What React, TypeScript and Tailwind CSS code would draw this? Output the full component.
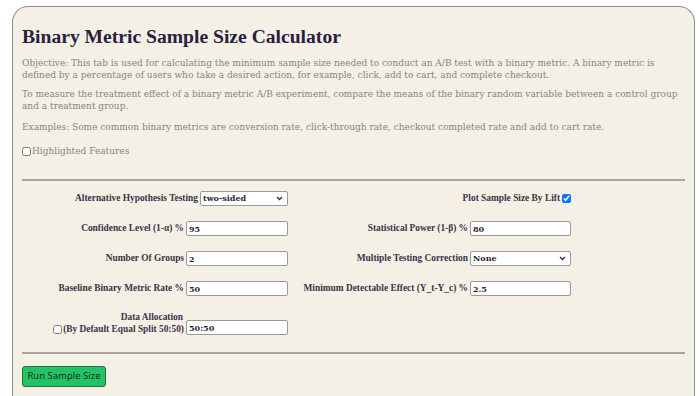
import { ReactNode } from 'react'

const serif = { fontFamily: '"DejaVu Serif", "Liberation Serif", serif' }
const libSerif = { fontFamily: '"Liberation Serif", "DejaVu Serif", serif' }

function TextInput({ value, w = 'w-[102px]' }: { value: string; w?: string }) {
    return (
        <input
            type="text"
            defaultValue={value}
            className={`${w} block h-[15px] rounded-[2px] border border-[#9a9a9a] bg-white px-[2px] py-0 text-[8px] font-bold text-[#2d2637] outline-none`}
            style={serif}
        />
    )
}

function Select({ value, w }: { value: string; w: string }) {
    return (
        <div className={`relative ${w} h-[15px]`}>
            <select
                defaultValue={value}
                className="block h-[15px] w-full appearance-none rounded-[2px] border border-[#9a9a9a] bg-white px-[2px] py-0 text-[8px] leading-[13px] font-bold text-[#2d2637] outline-none"
                style={serif}
            >
                <option>{value}</option>
            </select>
            <svg
                className="pointer-events-none absolute right-[5px] top-[5px]"
                width="7"
                height="5"
                viewBox="0 0 7 5"
            >
                <path d="M1 1l2.5 2.5L6 1" fill="none" stroke="#333" strokeWidth="1.4" />
            </svg>
        </div>
    )
}

function Field({ label, children }: { label: ReactNode; children: ReactNode }) {
    return (
        <div className="flex items-center justify-end gap-[2px]">
            <span className="text-[9.4px] font-bold text-[#3b3345]" style={libSerif}>
                {label}
            </span>
            {children}
        </div>
    )
}

export default function App() {
    return (
        <div className="min-h-screen bg-white pl-3 pr-[5px] pt-[6px]" style={serif}>
            <div className="h-[400px] rounded-t-[16px] border border-b-0 border-[#8c8c8c] bg-[#f4f0e5] pl-[9px] pr-[9px] pt-[17px]">
                <h1 className="text-[19.6px] font-bold leading-[26px] text-[#2a2040]" style={libSerif}>
                    Binary Metric Sample Size Calculator
                </h1>
                <div className="mt-[7px] text-[9px] leading-[12px] text-[#8a8385]">
                    <p className="whitespace-nowrap">
                        Objective: This tab is used for calculating the minimum sample size needed to conduct an A/B test with a binary metric. A binary metric is
                        <br />
                        defined by a percentage of users who take a desired action, for example, click, add to cart, and complete checkout.
                    </p>
                    <p className="mt-[7px] whitespace-nowrap">
                        To measure the treatment effect of a binary metric A/B experiment, compare the means of the binary random variable between a control group
                        <br />
                        and a treatment group.
                    </p>
                    <p className="mt-[9px] whitespace-nowrap">
                        Examples: Some common binary metrics are conversion rate, click-through rate, checkout completed rate and add to cart rate.
                    </p>
                    <label className="mt-[12px] flex items-center gap-[1px]">
                        <input type="checkbox" className="m-0 h-[9px] w-[9px]" />
                        <span>Highlighted Features</span>
                    </label>
                </div>

                <hr className="mt-[22px] border-t-2 border-[#a9a5a1]" />

                <div className="mt-[10px] grid grid-cols-[266px_283px] gap-y-[15px]">
                    <Field label="Alternative Hypothesis Testing">
                        <Select value="two-sided" w="w-[88px]" />
                    </Field>
                    <div className="flex items-center justify-end gap-[2px]">
                        <span className="text-[9.4px] font-bold text-[#3b3345]" style={libSerif}>
                            Plot Sample Size By Lift
                        </span>
                        <input type="checkbox" defaultChecked className="m-0 h-[9px] w-[9px]" />
                    </div>

                    <Field label="Confidence Level (1-α) %">
                        <TextInput value="95" />
                    </Field>
                    <Field label="Statistical Power (1-β) %">
                        <TextInput value="80" w="w-[101px]" />
                    </Field>

                    <Field label="Number Of Groups">
                        <TextInput value="2" />
                    </Field>
                    <Field label="Multiple Testing Correction">
                        <Select value="None" w="w-[101px]" />
                    </Field>

                    <Field label="Baseline Binary Metric Rate %">
                        <TextInput value="50" />
                    </Field>
                    <Field label="Minimum Detectable Effect (Y_t-Y_c) %">
                        <TextInput value="2.5" w="w-[101px]" />
                    </Field>

                    <div className="flex items-end justify-end gap-[2px]">
                        <div
                            className="text-right text-[9.4px] font-bold leading-[12px] text-[#3b3345]"
                            style={libSerif}
                        >
                            <div className="pr-[1px]">Data Allocation</div>
                            <label className="flex items-center">
                                <input type="checkbox" className="m-0 mr-[1px] h-[9px] w-[9px]" />
                                <span>(By Default Equal Split 50:50)</span>
                            </label>
                        </div>
                        <TextInput value="50:50" />
                    </div>
                    <div />
                </div>

                <hr className="mt-[17px] border-t-2 border-[#a9a5a1]" />

                <button
                    className="mt-[12px] h-[21px] w-[84px] rounded-[3px] border border-[#2c6b40] bg-[#20c465] text-[9.5px] text-[#17321f]"
                    style={{ fontFamily: '"Noto Sans", "Open Sans", sans-serif' }}
                >
                    Run Sample Size
                </button>
            </div>
        </div>
    )
}
